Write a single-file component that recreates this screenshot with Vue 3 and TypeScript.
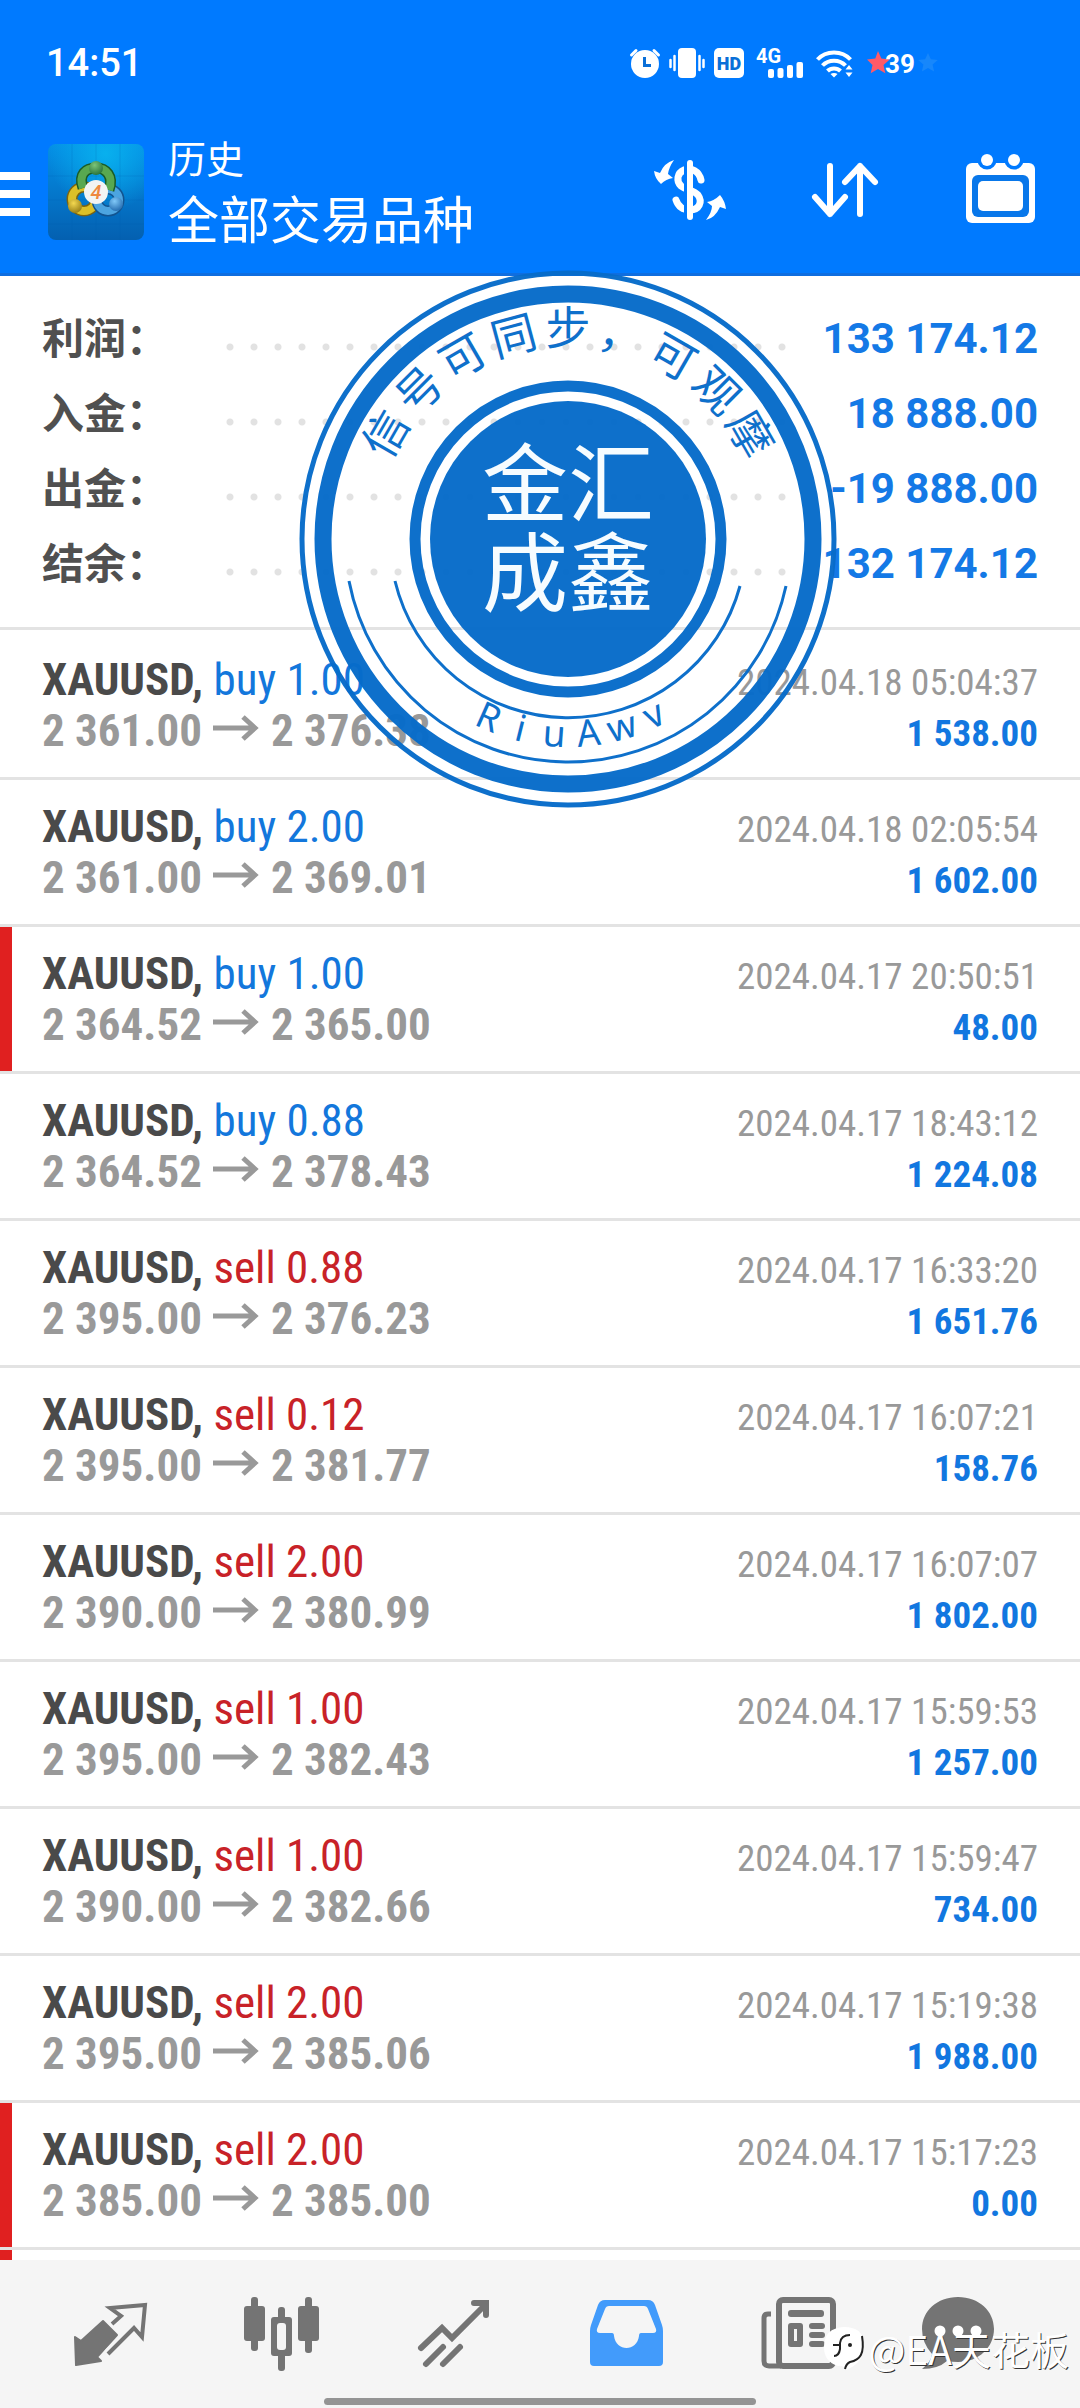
<script setup lang="ts">
interface SummaryLine {
  label: string
  value: string
}

interface Deal {
  side: 'buy' | 'sell'
  volume: string
  open: string
  close: string
  time: string
  profit: string
  marked?: boolean
}

interface ArcGlyph {
  char: string
  angle: number
}

const summary: SummaryLine[] = [
  { label: '利润：', value: '133 174.12' },
  { label: '入金：', value: '18 888.00' },
  { label: '出金：', value: '-19 888.00' },
  { label: '结余：', value: '132 174.12' },
]

const deals: Deal[] = [
  { side: 'buy', volume: '1.00', open: '2 361.00', close: '2 376.38', time: '2024.04.18 05:04:37', profit: '1 538.00' },
  { side: 'buy', volume: '2.00', open: '2 361.00', close: '2 369.01', time: '2024.04.18 02:05:54', profit: '1 602.00' },
  { side: 'buy', volume: '1.00', open: '2 364.52', close: '2 365.00', time: '2024.04.17 20:50:51', profit: '48.00', marked: true },
  { side: 'buy', volume: '0.88', open: '2 364.52', close: '2 378.43', time: '2024.04.17 18:43:12', profit: '1 224.08' },
  { side: 'sell', volume: '0.88', open: '2 395.00', close: '2 376.23', time: '2024.04.17 16:33:20', profit: '1 651.76' },
  { side: 'sell', volume: '0.12', open: '2 395.00', close: '2 381.77', time: '2024.04.17 16:07:21', profit: '158.76' },
  { side: 'sell', volume: '2.00', open: '2 390.00', close: '2 380.99', time: '2024.04.17 16:07:07', profit: '1 802.00' },
  { side: 'sell', volume: '1.00', open: '2 395.00', close: '2 382.43', time: '2024.04.17 15:59:53', profit: '1 257.00' },
  { side: 'sell', volume: '1.00', open: '2 390.00', close: '2 382.66', time: '2024.04.17 15:59:47', profit: '734.00' },
  { side: 'sell', volume: '2.00', open: '2 395.00', close: '2 385.06', time: '2024.04.17 15:19:38', profit: '1 988.00' },
  { side: 'sell', volume: '2.00', open: '2 385.00', close: '2 385.00', time: '2024.04.17 15:17:23', profit: '0.00', marked: true },
]

// Seal lettering, one glyph per step around the ring
const upperArc: ArcGlyph[] = [...'信号可同步，可观摩'].map((char, i) => ({ char, angle: (i - 4) * 15 }))
const lowerArc: ArcGlyph[] = [...'RiuAwv'].map((char, i) => ({ char, angle: 24 - i * 10 }))
</script>

<template>
  <div class="app">
    <header class="header">
      <div class="status">
        <time class="clock">14:51</time>
        <div class="indicators">
          <svg width="30" height="30" viewBox="0 0 30 30">
            <circle cx="15" cy="16" r="14" fill="#fff" />
            <path d="M1.500 7 6 2.500M28.500 7 24 2.500" stroke="#fff" stroke-width="3" stroke-linecap="round" />
            <path d="M14.500 9v8.500H21" fill="none" stroke="#0a6fd8" stroke-width="3" />
          </svg>
          <svg width="36" height="30" viewBox="0 0 36 30">
            <rect x="9" width="18" height="30" rx="4" fill="#fff" />
            <path d="M5.500 8v14M30.500 8v14M1.500 12v7M34.500 12v7" stroke="#fff" stroke-width="2.500" stroke-linecap="round" />
          </svg>
          <svg width="30" height="30" viewBox="0 0 30 30">
            <rect width="30" height="30" rx="5" fill="#fff" />
            <text x="15" y="21.500" text-anchor="middle" font-family="Roboto, sans-serif" font-weight="900" font-size="18" fill="#0a6fd8">HD</text>
          </svg>
          <svg width="51" height="30" viewBox="0 0 51 30">
            <text x="3" y="15" font-family="Roboto, sans-serif" font-weight="700" font-size="20" fill="#fff">4G</text>
            <g fill="#fff">
              <rect x="15" y="21" width="6" height="9" rx="2" />
              <rect x="24.500" y="20" width="6" height="10" rx="2" />
              <rect x="34" y="17" width="6" height="13" rx="2" />
              <rect x="43.500" y="14" width="6.500" height="16" rx="2" />
            </g>
          </svg>
          <svg width="40" height="30" viewBox="0 0 40 30">
            <g fill="none" stroke="#fff" stroke-width="4">
              <path d="M4.500 11.500C13 2 29 2 37.500 11.500" />
              <path d="M9.500 17.500C15.500 11 26.500 11 32.500 17.500" />
              <path d="M14.500 23C18 19.500 24 19.500 27.500 23" />
            </g>
            <path d="M21 29.500l-3.500-3.500c2-1.500 5-1.500 7 0z" fill="#fff" />
            <path d="M36 17l3.500 4.500h-7zM36 29l3.500-4.500h-7z" fill="#fff" />
          </svg>
          <svg width="76" height="30" viewBox="0 0 76 30">
            <path d="M16 3l3.400 7.600 8.300.900-6.200 5.500 1.800 8.200-7.300-4.200-7.300 4.200 1.800-8.200L5 11.500l8.300-.900z" fill="#ff5a68" />
            <path d="M66 5l2.900 6.300 6.900.700-5.200 4.600 1.500 6.800-6.100-3.500-6.100 3.500 1.500-6.800-5.200-4.600 6.900-.700z" fill="#1787fb" />
            <text x="23" y="25" font-family="Roboto, sans-serif" font-weight="700" font-size="26" fill="#fff">39</text>
          </svg>
        </div>
      </div>

      <div class="toolbar">
        <button class="menu" aria-label="菜单"><i></i><i></i><i></i></button>
        <svg class="logo" width="96" height="96" viewBox="0 0 96 96">
          <defs>
            <linearGradient id="tile" x1="0" y1="0" x2="0" y2="1">
              <stop offset="0" stop-color="#0490e6" />
              <stop offset="0.500" stop-color="#0478cc" />
              <stop offset="1" stop-color="#0460b0" />
            </linearGradient>
            <radialGradient id="glow" cx="0.600" cy="0.100" r="0.600">
              <stop offset="0" stop-color="#08b0ee" />
              <stop offset="1" stop-color="#08b0ee" stop-opacity="0" />
            </radialGradient>
            <radialGradient id="leaf" cx="0.400" cy="0.300" r="0.800">
              <stop offset="0" stop-color="#7cc478" />
              <stop offset="1" stop-color="#1f6a34" />
            </radialGradient>
            <radialGradient id="gold" cx="0.400" cy="0.300" r="0.800">
              <stop offset="0" stop-color="#f4d850" />
              <stop offset="1" stop-color="#8c7410" />
            </radialGradient>
            <radialGradient id="sky" cx="0.400" cy="0.300" r="0.800">
              <stop offset="0" stop-color="#80c8f8" />
              <stop offset="1" stop-color="#1a62a8" />
            </radialGradient>
          </defs>
          <rect width="96" height="96" rx="8" fill="url(#tile)" />
          <rect width="96" height="96" rx="8" fill="url(#glow)" />
          <path d="M24 0v96M48 0v96M72 0v96M0 32h96M0 56h96M0 80h96" stroke="#0460a8" stroke-opacity="0.200" />
          <circle cx="36" cy="55" r="12" fill="none" stroke="#7c6410" stroke-width="11" />
          <circle cx="36" cy="55" r="12" fill="none" stroke="#dcc028" stroke-width="8" />
          <circle cx="60" cy="56" r="11" fill="none" stroke="#125490" stroke-width="11" />
          <circle cx="60" cy="56" r="11" fill="none" stroke="#4ca4e0" stroke-width="8" />
          <path d="M35 44C30 30 38 24 48 24s18 8 13 22" fill="none" stroke="#1a5c28" stroke-width="11" />
          <path d="M35 44C30 30 38 24 48 24s18 8 13 22" fill="none" stroke="#58a850" stroke-width="8" />
          <circle cx="48" cy="24" r="7" fill="url(#leaf)" />
          <circle cx="27" cy="62" r="7" fill="url(#gold)" />
          <circle cx="68" cy="60" r="7" fill="url(#sky)" />
          <circle cx="48" cy="48" r="12" fill="#f2f4f4" />
          <text x="48" y="55" text-anchor="middle" font-family="Roboto, sans-serif" font-size="20" font-style="italic" font-weight="500" fill="#ee8840">4</text>
        </svg>
        <div class="titles">
          <span class="caption">历史</span>
          <h1>全部交易品种</h1>
        </div>
        <div class="actions">
          <button aria-label="币种">
            <svg width="76" height="76" viewBox="0 0 76 76">
              <path d="M49 26C47 17 39 13 32 16c-7 3-8 11-3 16 5 4 13 4 17 9 5 7 1 15-8 15-8 0-12-4-14-10" fill="none" stroke="#fff" stroke-width="7" stroke-linecap="round" />
              <path d="M33.500 4v64" stroke="#007aff" stroke-width="3" />
              <path d="M38 9v54" stroke="#fff" stroke-width="6" stroke-linecap="round" />
              <path d="M22 6Q17 13 16 20l5 4q-7 1-12 6Q3 25 2 17l6 2Q12 9 22 6z" fill="#fff" />
              <path d="M54 66q6-8 6-14l-5-4q7-1 13-7 5 6 6 14l-6-2q-5 11-14 13z" fill="#fff" />
            </svg>
          </button>
          <button aria-label="排序">
            <svg width="76" height="76" viewBox="0 0 76 76" fill="none" stroke="#fff" stroke-width="6" stroke-linecap="round" stroke-linejoin="round">
              <path d="M23 12v48M8 43l15 17 15-17" />
              <path d="M53 60V12M38 28l15-16 15 16" />
            </svg>
          </button>
          <button aria-label="日期">
            <svg width="76" height="76" viewBox="0 0 76 76">
              <rect x="4" y="9" width="69" height="60" rx="6" fill="#fff" />
              <circle cx="25" cy="6" r="9.500" fill="#007aff" />
              <circle cx="52" cy="6" r="9.500" fill="#007aff" />
              <circle cx="25" cy="6" r="6" fill="#fff" />
              <circle cx="52" cy="6" r="6" fill="#fff" />
              <rect x="10" y="21" width="57" height="42" rx="6" fill="#0877ea" />
              <rect x="16" y="27" width="45" height="30" rx="5" fill="#fff" />
            </svg>
          </button>
        </div>
      </div>
    </header>

    <main class="content">
      <dl class="summary">
        <div v-for="line in summary" :key="line.label" class="summary-line">
          <dt>{{ line.label }}</dt>
          <i class="leader"></i>
          <dd>{{ line.value }}</dd>
        </div>
      </dl>

      <ul class="deals">
        <li v-for="deal in deals" :key="deal.time" class="deal" :class="{ marked: deal.marked }">
          <div class="line">
            <span><b class="symbol">XAUUSD,</b> <span :class="deal.side">{{ deal.side }} {{ deal.volume }}</span></span>
            <time class="time">{{ deal.time }}</time>
          </div>
          <div class="line">
            <span class="prices">{{ deal.open }}<svg class="to" width="47" height="26" viewBox="0 0 47 26" fill="none" stroke="#999" stroke-width="5"><path d="M0 13h43M30 2l12 11-12 11" /></svg>{{ deal.close }}</span>
            <b class="profit">{{ deal.profit }}</b>
          </div>
        </li>
        <li class="deal marked"></li>
      </ul>
    </main>

    <nav class="tabs">
      <button aria-label="行情">
        <svg width="76" height="76" viewBox="0 0 76 76">
          <path d="M3 42l6 4 22-20 14 14-20 22 4 4-25 4z" fill="#747474" stroke="#747474" stroke-width="2" stroke-linejoin="round" />
          <path d="M40 29l9-8-11-8 35-3-3 32-8-9-26 26" fill="none" stroke="#f5f5f5" stroke-width="10" />
          <path d="M40 29l9-8-11-8 35-3-3 32-8-9-26 26" fill="none" stroke="#747474" stroke-width="4" />
        </svg>
      </button>
      <button aria-label="图表">
        <svg width="76" height="76" viewBox="0 0 76 76">
          <g fill="#747474">
            <rect y="11" width="21" height="35" rx="3" />
            <rect x="7" y="2" width="7" height="54" rx="3" />
            <rect x="54" y="11" width="21" height="35" rx="3" />
            <rect x="61" y="2" width="7" height="56" rx="3" />
            <rect x="34" y="12" width="7" height="64" rx="3" />
            <rect x="27" y="22" width="21" height="39" rx="3" />
          </g>
          <rect x="33" y="28" width="9" height="27" rx="3" fill="#f5f5f5" />
        </svg>
      </button>
      <button aria-label="交易">
        <svg width="76" height="76" viewBox="0 0 76 76" fill="none" stroke="#747474" stroke-width="6" stroke-linecap="round">
          <path d="M5 53l21-20 10 10L69 10M10 69l17-17M27 69l17-17" />
          <path d="M58 8h12v12" />
        </svg>
      </button>
      <button aria-label="历史" aria-current="page">
        <svg width="76" height="76" viewBox="0 0 76 76">
          <path d="M17 5h43q5 0 7 5l7 20q1 3 1 6v31q0 4-4 4H6q-4 0-4-4V36q0-3 1-6l7-20q2-5 7-5zM21 11q-3 0-4 3L9 34q-1 4 3 4h12q2 0 2 3c2 16 23 16 25 0q0-3 2-3h12q4 0 3-4l-8-20q-1-3-4-3z" fill="#429bfb" fill-rule="evenodd" />
        </svg>
      </button>
      <button aria-label="新闻">
        <svg width="76" height="76" viewBox="0 0 76 76">
          <rect x="19" y="5" width="54" height="66" rx="4" fill="none" stroke="#747474" stroke-width="6" />
          <path d="M11 19H8q-4 0-4 4v43q0 5 5 5h12" fill="none" stroke="#747474" stroke-width="5" />
          <g fill="#747474">
            <rect x="28" y="15" width="36" height="7" rx="3" />
            <path d="M31 28h9q3 0 3 3v18q0 3-3 3h-9q-3 0-3-3V31q0-3 3-3zm3 6v12h3V34z" fill-rule="evenodd" />
            <rect x="49" y="28" width="16" height="6" rx="3" />
            <rect x="49" y="37" width="16" height="6" rx="3" />
            <rect x="49" y="46" width="16" height="6" rx="3" />
          </g>
        </svg>
      </button>
      <button aria-label="消息">
        <svg width="76" height="76" viewBox="0 0 76 76">
          <path d="M38 2c21 0 36 14 36 32S59 67 38 67q-6 0-11-1-9 8-25 8 9-7 10-15Q2 48 2 34C2 16 17 2 38 2z" fill="#747474" />
          <g fill="#fff"><circle cx="20" cy="36" r="5.500" /><circle cx="38" cy="36" r="5.500" /><circle cx="56" cy="36" r="5.500" /></g>
        </svg>
      </button>
      <i class="home-bar"></i>
    </nav>

    <svg class="seal" width="540" height="540" viewBox="-270 -270 540 540">
      <g fill="none" stroke="#076cca">
        <circle r="266" stroke-width="5" />
        <circle r="245" stroke-width="17" />
        <circle r="153" stroke-width="11" />
        <path d="M-219 42A223 223 0 0 0 218 47" stroke-width="3" />
        <path d="M-173 42A178 178 0 0 0 172 47" stroke-width="3" />
      </g>
      <circle r="138" fill="#076cca" />
      <g class="seal-ring">
        <text v-for="g in upperArc" :key="g.angle" y="-194" font-size="45" :transform="`rotate(${g.angle})`">{{ g.char }}</text>
        <text v-for="g in lowerArc" :key="g.angle" class="latin" y="208" font-size="37" :transform="`rotate(${g.angle})`">{{ g.char }}</text>
      </g>
      <g class="seal-core" font-size="86">
        <text y="-23">金汇</text>
        <text y="66">成鑫</text>
      </g>
    </svg>

    <div class="watermark">
      <svg width="40" height="44" viewBox="0 0 40 44">
        <path d="M22 44q-3-5-8-4Q0 36 0 21 0 2 20 1q20 0 20 18 0 18-18 25z" fill="#fff" />
        <path d="M10 30q5 0 6-7v-6q1-8 10-8M9 19h8M38 10c3 18-2 24-12 26q-4 2-5 7" fill="none" stroke="#222" stroke-width="2" />
        <circle cx="26" cy="19" r="2" fill="#222" />
      </svg>
      <span>@EA天花板</span>
    </div>
  </div>
</template>

<style>
body {
  margin: 0;
}
</style>

<style scoped>
.app {
  position: relative;
  display: flex;
  flex-direction: column;
  height: 100vh;
  overflow: hidden;
  background: #fff;
  font-family: Roboto, "Noto Sans CJK SC", sans-serif;
}

button {
  padding: 0;
  border: 0;
  background: none;
}

svg {
  display: block;
  overflow: visible;
}

.header {
  flex: none;
  padding-bottom: 15px;
  border-bottom: 3px solid #0f6ee0;
  background: #007aff;
  color: #fff;
}

.status {
  display: flex;
  align-items: center;
  justify-content: space-between;
  height: 126px;
  padding: 0 142px 0 46px;
}

.clock {
  font-size: 38px;
  font-weight: 500;
}

.indicators {
  display: flex;
  gap: 9px;
}

.toolbar {
  display: flex;
  align-items: center;
  height: 132px;
  padding-right: 42px;
}

.menu {
  display: flex;
  flex-direction: column;
  gap: 10px;
  width: 30px;
  margin-right: 18px;
  padding-top: 4px;
}

.menu i {
  height: 8px;
  background: #fff;
}

.titles {
  flex: 1;
  margin-left: 24px;
  padding-bottom: 10px;
  font-family: "Noto Sans CJK SC", sans-serif;
  line-height: 60px;
}

.caption {
  display: block;
  font-size: 38px;
}

h1 {
  margin: 0;
  font-size: 51px;
  font-weight: 400;
}

.actions {
  display: flex;
  gap: 79px;
}

.content {
  flex: 1;
  min-height: 0;
  overflow: hidden;
}

.summary {
  margin: 0;
  padding: 24px 42px 27px;
  border-bottom: 3px solid #e3e3e3;
}

.summary-line {
  display: flex;
  align-items: center;
  height: 75px;
}

dt {
  width: 176px;
  padding-bottom: 4px;
  color: #505050;
  font: 700 42px "Noto Sans CJK SC", sans-serif;
}

.leader {
  flex: 1;
  height: 8px;
  margin-top: 18px;
  background: radial-gradient(circle at 12px 4px, #e2e2e2 3px, transparent 4px) 0 0 / 24px 8px repeat-x;
}

dd {
  width: 244px;
  margin: 0;
  padding-top: 2px;
  color: #1479e6;
  font-size: 42px;
  font-weight: 700;
  text-align: right;
  white-space: nowrap;
}

.deals {
  margin: 0;
  padding: 3px 0 0;
  list-style: none;
  font-family: "Roboto Condensed", "Liberation Sans Narrow", Roboto, sans-serif;
  font-size: 45px;
  line-height: 51px;
}

.deal {
  position: relative;
  min-height: 102px;
  padding: 21px 42px;
  border-bottom: 3px solid #e3e3e3;
}

.marked::before {
  content: "";
  position: absolute;
  inset: 0 auto 0 0;
  width: 12px;
  background: #e02020;
}

.line {
  display: flex;
  align-items: baseline;
  justify-content: space-between;
  height: 51px;
  white-space: nowrap;
}

.symbol {
  color: #4a4a4a;
}

.buy {
  color: #1377dc;
}

.sell {
  color: #c82228;
}

.prices {
  color: #999;
  font-weight: 700;
}

.to {
  display: inline-block;
  margin: 0 11px;
  vertical-align: 5px;
}

.time,
.profit {
  font-size: 37px;
}

.time {
  color: #999;
}

.profit {
  color: #1277e0;
}

.tabs {
  position: relative;
  display: flex;
  flex: none;
  height: 148px;
  box-sizing: border-box;
  padding: 35px 48px 37px 24px;
  background: #f5f5f5;
}

.tabs button {
  display: flex;
  flex: 172;
  justify-content: center;
}

.tabs button:nth-of-type(6) {
  flex: 148;
}

.home-bar {
  position: absolute;
  bottom: 3px;
  left: 30%;
  width: 40%;
  height: 7px;
  border-radius: 4px;
  background: #949494;
}

.seal {
  position: absolute;
  top: 269px;
  left: calc(50% - 242px);
  opacity: 0.97;
}

.seal text {
  font-family: "Noto Sans CJK SC", sans-serif;
  text-anchor: middle;
}

.seal-ring {
  fill: #076cca;
}

.seal .latin {
  font-family: "Noto Sans", sans-serif;
}

.seal-core {
  fill: #f6fcff;
}

.watermark {
  position: absolute;
  right: 11px;
  bottom: 34px;
  display: flex;
  align-items: center;
  gap: 4px;
  color: #fff;
  font-family: "Noto Sans CJK SC", sans-serif;
  font-size: 39px;
  font-weight: 400;
  line-height: 52px;
  text-shadow: 1px 1px 0 #333;
}
</style>
